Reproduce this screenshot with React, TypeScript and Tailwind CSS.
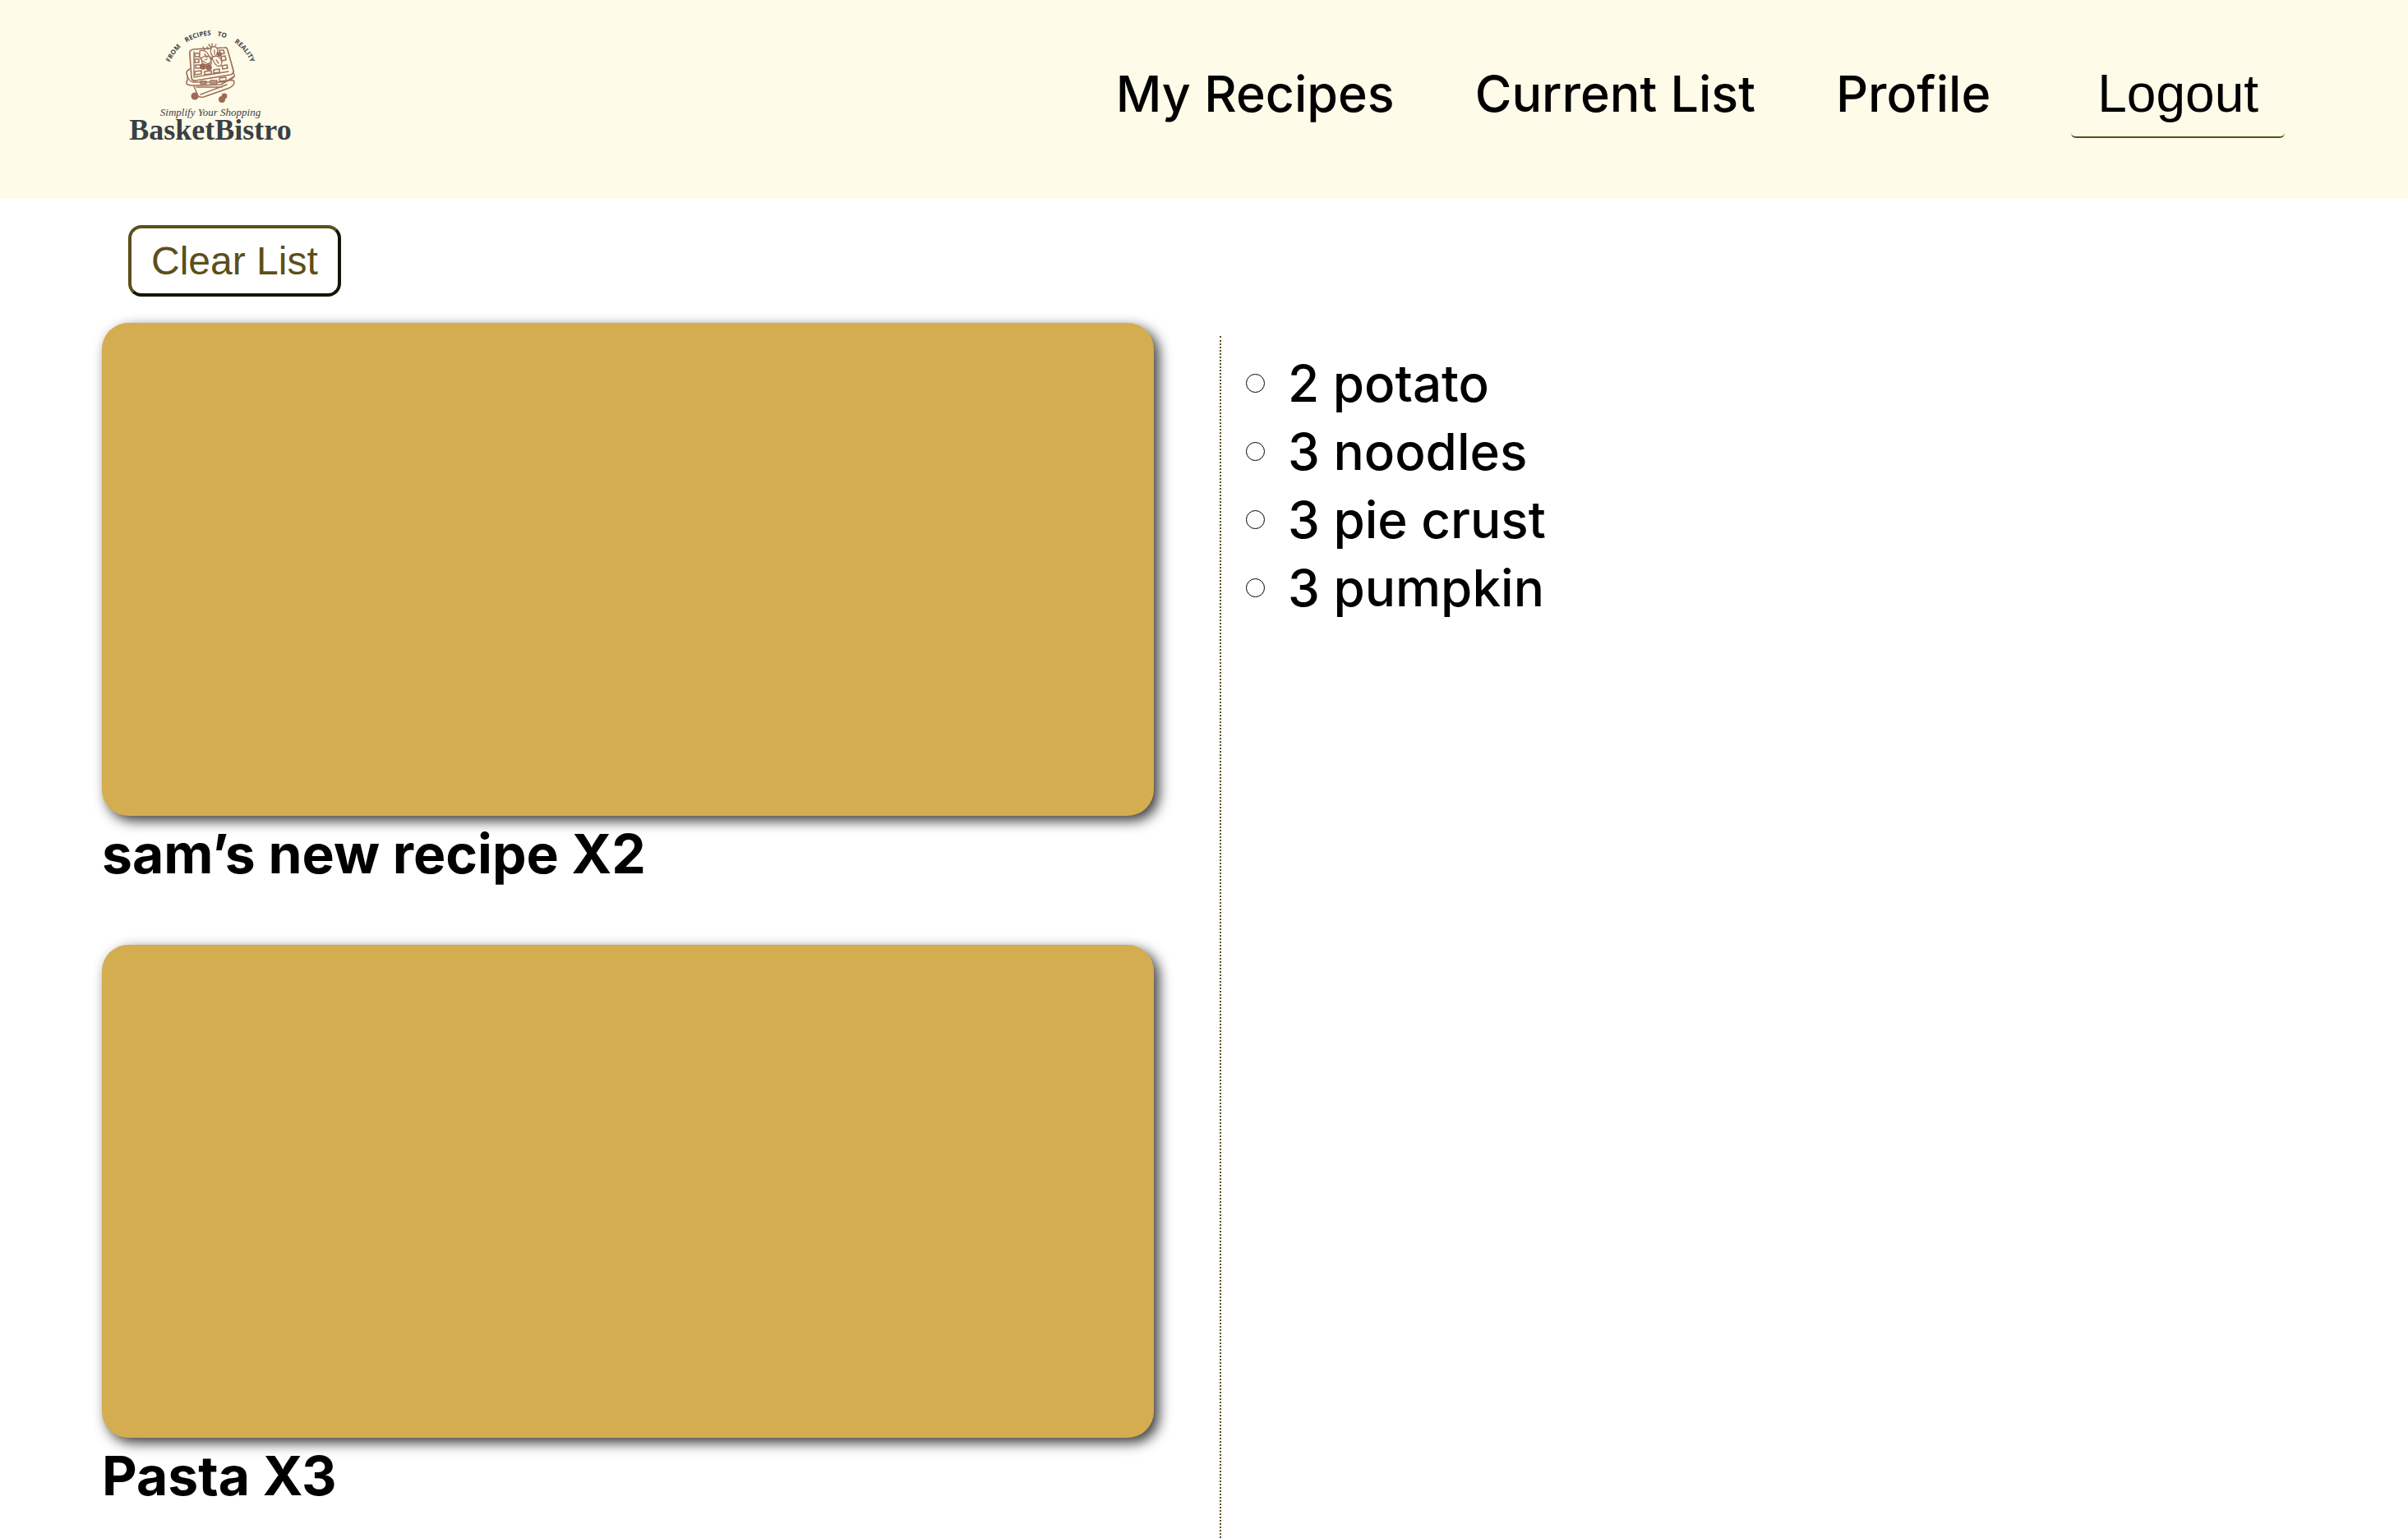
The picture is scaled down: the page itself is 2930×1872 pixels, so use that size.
const recipes = [
  { name: "sam’s new recipe", count: 2 },
  { name: "Pasta", count: 3 },
];

const ingredients = ["2 potato", "3 noodles", "3 pie crust", "3 pumpkin"];

const links = ["My Recipes", "Current List", "Profile"];

function Logo() {
  return (
    <svg viewBox="0 0 230 170" className="h-[170px] w-[230px]" role="img" aria-label="BasketBistro">
      <defs>
        <path id="arc" d="M 66.9 56.1 A 53 53 0 0 1 165.1 56.1" />
      </defs>
      <g className="fill-[#3b4043] font-['Open_Sans',sans-serif] text-[8px] font-bold">
        <text>
          <textPath href="#arc">FROM</textPath>
        </text>
        <text textAnchor="middle">
          <textPath href="#arc" startOffset="38%">
            RECIPES
          </textPath>
        </text>
        <text textAnchor="middle">
          <textPath href="#arc" startOffset="61%">
            TO
          </textPath>
        </text>
        <text textAnchor="end">
          <textPath href="#arc" startOffset="100%">
            REALITY
          </textPath>
        </text>
      </g>
      <g fill="none" stroke="#9d7059" strokeWidth="1.3" strokeLinecap="round" strokeLinejoin="round">
        <path d="M95 40 Q90 41 91 46 L93 75 Q94 79 98 78 L140 71 Q145 70 144 66 L137 41 Q136 37 133 38 Z" strokeWidth="1.7" />
        <path d="M96 43 L96 74 L138 67" />
        <path d="M97 45h6v4h-6zM97 52h5v4h-5zM98 59h6v4h-6zM97 67l8-1v4l-8 1zM109 67l8-1v4l-8 1zM120 65l7-1v4l-7 1zM130 60l6-1 1 4-6 1zM127 41l5 0 1 4-5 1zM129 49l5-1 1 5-5 1z" strokeWidth="1.6" />
        <path d="M91 64 Q85 67 88 72 Q89 77 87 80 Q86 84 95 84 L129 83 L145 73" strokeWidth="1.6" />
        <path d="M88 73 Q91 80 96 80 L128 80 Q140 80 145 73 Q146 70 143 68 M104 79h7v3h-7zM116 78h8v4h-8zM127 75l8-1v4l-8 1z" />
        <path d="M96 85 L101 97 Q103 99 108 98 L139 87 Q145 84 145 80 Q145 77 141 78 M104 95 L136 83 M99 86 L130 86" strokeWidth="1.5" />
        <path d="M103 42 Q110 39 115 49 Q118 56 117 58 Q108 58 103 50 ZM118 37 Q127 36 124 45 Q122 50 119 49 Q114 43 118 37ZM105 50 Q115 46 118 52 Q113 62 106 57 ZM118 49 Q128 46 130 56 Q129 62 124 60 Q119 56 118 49Z" fill="#fffbe9" />
        <path d="M109 41l-2-4M113 40l-1-3M117 38l-3-4M118 37l0-4M121 37l2-3M109 46l3 4M121 41l0 5M123 53l3 4M109 53l3-1" />
      </g>
      <g fill="#9d6a54">
        <circle cx="107" cy="61" r="3.8" />
        <circle cx="114" cy="62" r="3.8" />
        <circle cx="127" cy="46" r="3" />
        <circle cx="97" cy="97" r="4.5" />
        <circle cx="133" cy="97" r="3.4" />
        <circle cx="130" cy="101" r="4" />
      </g>
      <text x="116" y="121" textAnchor="middle" className="fill-[#3b4043] font-['Liberation_Serif',serif] text-[13px] italic">
        Simplify Your Shopping
      </text>
      <text x="116" y="150" textAnchor="middle" className="fill-[#3b4043] font-['Liberation_Serif',serif] text-[36px] font-bold">
        BasketBistro
      </text>
    </svg>
  );
}

export default function App() {
  return (
    <div className="flex min-h-screen flex-col bg-white font-['Inter',sans-serif] text-black">
      <header className="flex h-[242px] items-start justify-between bg-[#fffbe9] pt-5 pr-[150px] pl-[140px]">
        <a href="#home">
          <Logo />
        </a>
        <nav className="mt-14 flex items-baseline gap-[98px] text-[61px] leading-[76px] font-medium">
          {links.map((label) => (
            <a key={label} href="#nav">
              {label}
            </a>
          ))}
          <button
            type="button"
            className="rounded-[6px] border-b-2 border-[#5c4f1a] px-8 pb-[14px] font-['Liberation_Sans',sans-serif] text-[64px] font-normal"
          >
            Logout
          </button>
        </nav>
      </header>

      <div className="pt-8 pb-8 pl-[156px]">
        <button
          type="button"
          className="rounded-2xl border-4 border-t-[#5c4f1a] border-r-[#141503] border-b-[#141503] border-l-[#5c4f1a] px-6 py-3 font-['Liberation_Sans',sans-serif] text-5xl leading-[55px] text-[#5c4f1a]"
        >
          Clear List
        </button>
      </div>

      <main className="grid grow grid-cols-[1360fr_1446fr] pl-[124px]">
        <section className="flex flex-col gap-16 pr-20">
          {recipes.map((recipe) => (
            <article key={recipe.name}>
              <div className="h-[600px] rounded-[32px] bg-[#d4ad51] shadow-[6px_6px_16px_rgba(0,0,0,0.78)]" />
              <h2 className="text-[66px] leading-[93px] font-bold">
                {recipe.name} X{recipe.count}
              </h2>
            </article>
          ))}
        </section>
        <aside className="mt-4 border-l-2 border-dotted border-[#5c4f1a] pt-4 pl-[30px]">
          <ul className="text-[62px] leading-[83px] font-medium">
            {ingredients.map((item) => (
              <li key={item} className="flex items-center gap-7">
                <span className="size-[23px] rounded-full border border-black" />
                {item}
              </li>
            ))}
          </ul>
        </aside>
      </main>
    </div>
  );
}
